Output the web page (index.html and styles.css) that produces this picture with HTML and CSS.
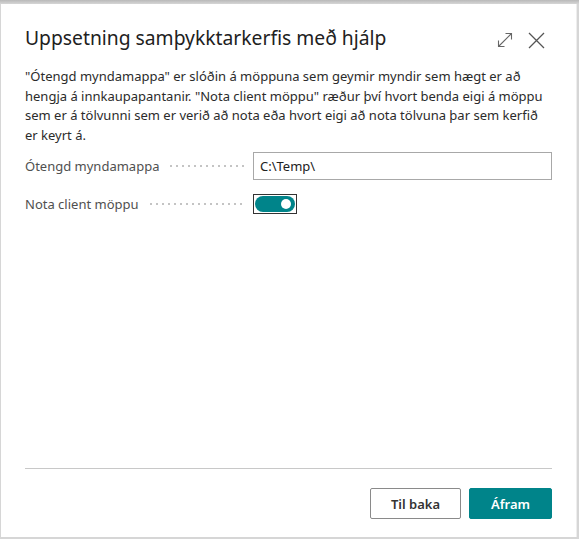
FILE: index.html
```html
<!DOCTYPE html>
<html>
    <head>
        <title>Uppsetning samþykktarkerfis með hjálp</title>
        <link rel="stylesheet" href="styles.css">
    </head>
    <body>
        <div class="dialog">
            <header class="dialog-header">
                <h1>Uppsetning samþykktarkerfis með hjálp</h1>
                <div class="header-actions">
                    <button class="icon-button" title="Stækka">
                        <svg width="16" height="16" viewBox="0 0 16 16">
                            <path d="M1.5 14.5 L14.5 1.5 M8.5 1.5 H14.5 V7.5 M1.5 8.5 V14.5 H7.5" fill="none" stroke="#666" stroke-width="1.1"/>
                        </svg>
                    </button>
                    <button class="icon-button" title="Loka">
                        <svg width="17" height="17" viewBox="0 0 17 17">
                            <path d="M1 1 L16 16 M16 1 L1 16" fill="none" stroke="#555" stroke-width="1.3"/>
                        </svg>
                    </button>
                </div>
            </header>

            <p class="description">"Ótengd myndamappa" er slóðin á möppuna sem geymir myndir sem hægt er að hengja á innkaupapantanir. "Nota client möppu" ræður því hvort benda eigi á möppu sem er á tölvunni sem er verið að nota eða hvort eigi að nota tölvuna þar sem kerfið er keyrt á.</p>

            <div class="field-row">
                <label class="field-label" for="image-folder"><span>Ótengd myndamappa</span></label>
                <input type="text" id="image-folder" class="field-input" value="C:\Temp\">
            </div>

            <div class="field-row">
                <label class="field-label"><span>Nota client möppu</span></label>
                <div class="toggle-focus">
                    <div class="toggle on"><span class="knob"></span></div>
                </div>
            </div>

            <footer class="dialog-footer">
                <button class="btn btn-secondary">Til baka</button>
                <button class="btn btn-primary">Áfram</button>
            </footer>
        </div>
    </body>
</html>
```

FILE: styles.css
```css
html, body {
    height: 100%;
}

body {
    margin: 0;
    font-family: "Noto Sans", "Open Sans", sans-serif;
    background: linear-gradient(#b9b9b9, #d6d6d6 4px, #d6d6d6);
    color: #333;
    display: flex;
}

.dialog {
    flex: 1;
    margin: 4px 2px 2px 1px;
    background-color: #fff;
    padding: 0 24px;
    display: flex;
    flex-direction: column;
    border-right: 1px solid #eee;
}

.dialog-header {
    display: flex;
    align-items: center;
    justify-content: space-between;
    padding-top: 20px;
}

h1 {
    margin: 0;
    font-size: 19.3px;
    line-height: 28px;
    font-weight: 400;
    color: #212121;
}

.header-actions {
    display: flex;
    gap: 15px;
    margin-top: 4px;
    margin-right: 7px;
}

.icon-button {
    background: none;
    border: none;
    padding: 0;
    width: 17px;
    height: 17px;
    display: flex;
    align-items: center;
    justify-content: center;
}

.description {
    margin: 15px 0 7px;
    font-size: 13px;
    line-height: 19.5px;
    color: #2b2b2b;
}

.field-row {
    display: flex;
    align-items: center;
    height: 28px;
    margin-bottom: 10px;
}

.field-label {
    width: 220px;
    margin-right: 8px;
    display: flex;
    align-items: center;
    font-size: 13px;
    color: #505050;
}

/* dotted leader between label and value */
.field-label::after {
    content: "";
    flex: 1;
    height: 2px;
    margin-left: 9px;
    background-image: radial-gradient(circle, #c4c4c4 0.9px, transparent 1.1px);
    background-size: 6px 2px;
    background-repeat: repeat-x;
}

.field-input {
    flex: 1;
    height: 28px;
    box-sizing: border-box;
    border: 1px solid #a8a8a8;
    padding: 0 6px;
    font-family: inherit;
    font-size: 13px;
    color: #212121;
}

.toggle-focus {
    border: 1px solid #333;
    padding: 1px;
}

.toggle {
    width: 40px;
    height: 16px;
    border-radius: 8px;
    background-color: #00848a;
    position: relative;
}

.knob {
    position: absolute;
    top: 3px;
    right: 4px;
    width: 10px;
    height: 10px;
    border-radius: 50%;
    background-color: #fff;
}

.dialog-footer {
    margin-top: auto;
    border-top: 1px solid #c8c8c8;
    padding: 19px 0 18px;
    display: flex;
    justify-content: flex-end;
    gap: 8px;
}

.btn {
    height: 31px;
    border-radius: 2px;
    font-family: inherit;
    font-size: 13px;
    font-weight: 600;
    cursor: pointer;
}

.btn-secondary {
    width: 91px;
    background-color: #fff;
    border: 1px solid #8a8a8a;
    color: #333;
}

.btn-primary {
    width: 83px;
    background-color: #00848a;
    border: 1px solid #00848a;
    color: #fff;
}
```
